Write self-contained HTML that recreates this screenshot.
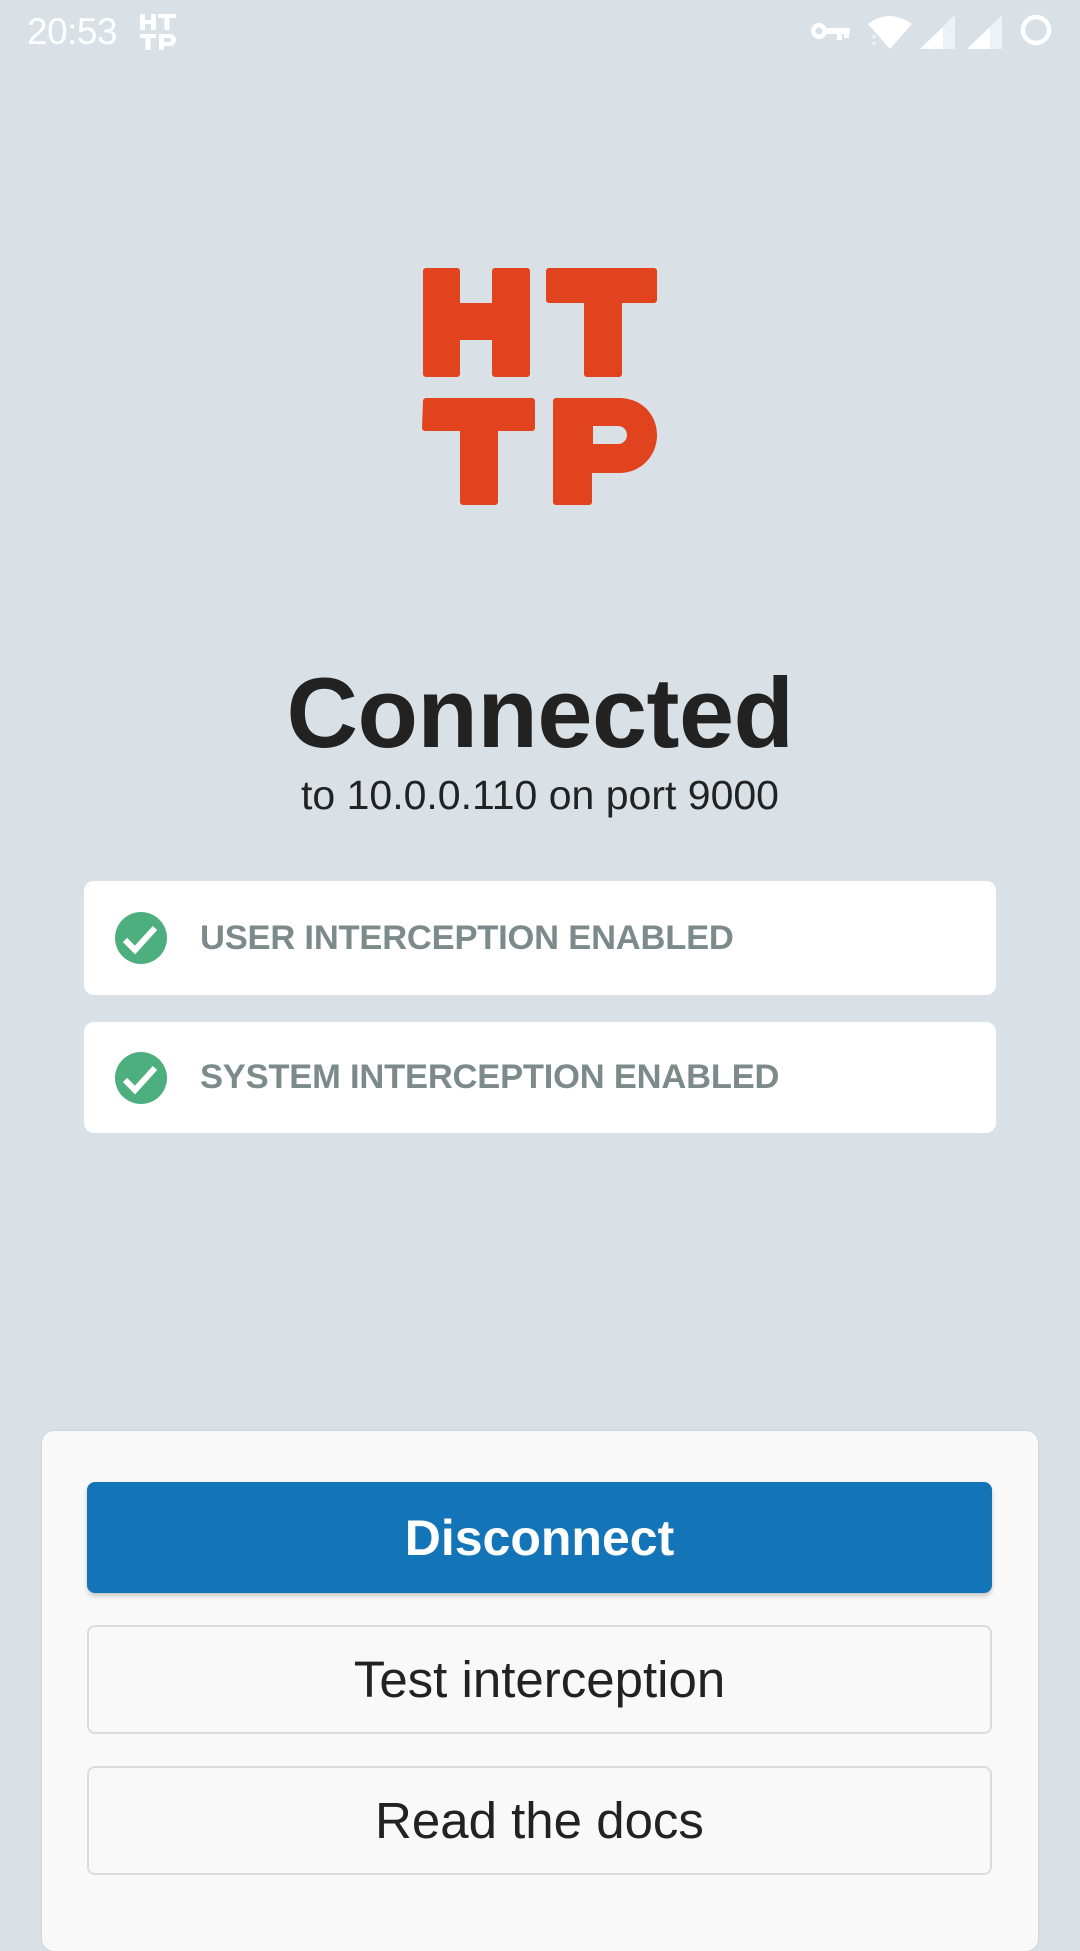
<!DOCTYPE html>
<html><head><meta charset="utf-8"><style>
html,body{margin:0;padding:0}
body{width:1080px;height:1920px;background:#d9e1e6;position:relative;overflow:hidden;font-family:"Liberation Sans",sans-serif}
.abs{position:absolute}
.card{position:absolute;left:84px;width:912px;background:#fff;border-radius:10px}
.card .t{position:absolute;left:116px;top:0;bottom:0;display:flex;align-items:center;color:#7d8a8b;font-weight:bold;font-size:34.5px;letter-spacing:-0.2px}
.card svg{position:absolute;left:115px;top:50%;margin-top:-26px}
.btn{position:absolute;left:87px;width:905px;border-radius:8px;display:flex;align-items:center;justify-content:center;box-sizing:border-box}
</style></head><body>
<div class="abs" style="left:27px;top:11px;color:#fff;font-size:37px;font-weight:300;letter-spacing:-0.5px">20:53</div>
<svg class="abs" style="left:140px;top:14px" width="38" height="38" viewBox="0 0 38 38" fill="#fff">
<path d="M0 0h5v6h6V0h5v16h-5v-6H5v6H0z"/><path d="M18 0h18v4h-6.5v12h-5V4H18z"/>
<path d="M0 20h16v4H10.5v12h-5V24H0z"/><path d="M19 20h11a6 6 0 0 1 0 12h-6v4h-5z M24 24v4h5a2 2 0 0 0 0-4z" fill-rule="evenodd"/>
</svg>
<svg class="abs" style="left:810px;top:22px" width="42" height="20" viewBox="0 0 42 20" fill="#fff">
<circle cx="9" cy="9" r="8"/><circle cx="9" cy="9" r="3.5" fill="#d9e1e6"/><rect x="15" y="6" width="25" height="6"/><rect x="27" y="10" width="5" height="8"/><rect x="34" y="10" width="5" height="6"/>
</svg>
<svg class="abs" style="left:866px;top:14px" width="48" height="36" viewBox="0 0 48 36">
<path d="M2 10Q23-6 46 10L24 35Z" fill="#fff"/><path d="M5 24l3-4 3 4zM5 28l3 4 3-4z" fill="#eef2f4"/>
</svg>
<svg class="abs" style="left:920px;top:14px" width="90" height="36" viewBox="0 0 90 36">
<path d="M0 35L35 1V35Z" fill="#eef2f4"/><path d="M0 35L23 13V35Z" fill="#fff"/>
<path d="M47 35L82 1V35Z" fill="#eef2f4"/><path d="M47 35L70 13V35Z" fill="#fff"/>
</svg>
<svg class="abs" style="left:1018px;top:12px" width="36" height="36"><circle cx="18" cy="18" r="13" fill="none" stroke="#fff" stroke-width="4.5"/></svg>
<svg class="abs" style="left:0;top:0" width="1080" height="520" fill="#e1431f">
<path d="M423 271a3 3 0 0 1 3-3h31a3 3 0 0 1 3 3v32h32v-32a3 3 0 0 1 3-3h32a3 3 0 0 1 3 3v103a3 3 0 0 1-3 3h-32a3 3 0 0 1-3-3v-34h-32v34a3 3 0 0 1-3 3h-31a3 3 0 0 1-3-3z"/>
<path d="M546 271a3 3 0 0 1 3-3h105a3 3 0 0 1 3 3v29a3 3 0 0 1-3 3h-32v71a3 3 0 0 1-3 3h-32a3 3 0 0 1-3-3v-71h-35a3 3 0 0 1-3-3z"/>
<path d="M423 401a3 3 0 0 1 3-3h106a3 3 0 0 1 3 3v27a3 3 0 0 1-3 3h-34v71a3 3 0 0 1-3 3h-32a3 3 0 0 1-3-3v-71h-35a3 3 0 0 1-3-3z"/>
<path fill-rule="evenodd" d="M553 401a3 3 0 0 1 3-3h63c22 0 38 16 38 37s-16 38-38 38h-27v29a3 3 0 0 1-3 3h-33a3 3 0 0 1-3-3z M593 426v18h25a9 9 0 0 0 0-18z"/>
</svg>
<div class="abs" style="left:0;width:1080px;top:653px;text-align:center;font-size:99px;font-weight:bold;color:#222;letter-spacing:-0.5px;line-height:120px">Connected</div>
<div class="abs" style="left:0;width:1080px;top:770px;text-align:center;font-size:41px;color:#222;line-height:50px">to 10.0.0.110 on port 9000</div>
<div class="card" style="top:881px;height:114px">
<svg width="52" height="52" viewBox="0 0 52 52" style="left:31px"><circle cx="26" cy="26" r="26" fill="#4caf7d"/><path d="M10 28l10 10 20-22" fill="none" stroke="#fff" stroke-width="6"/></svg>
<div class="t">USER INTERCEPTION ENABLED</div></div>
<div class="card" style="top:1022px;height:111px">
<svg width="52" height="52" viewBox="0 0 52 52" style="left:31px"><circle cx="26" cy="26" r="26" fill="#4caf7d"/><path d="M10 28l10 10 20-22" fill="none" stroke="#fff" stroke-width="6"/></svg>
<div class="t">SYSTEM INTERCEPTION ENABLED</div></div>
<div class="abs" style="left:42px;top:1431px;width:996px;height:520px;background:#f9f9f9;border-radius:12px;box-shadow:0 0 2px rgba(0,0,0,0.12)"></div>
<div class="btn" style="top:1482px;height:111px;background:#1375b8;color:#fff;font-weight:bold;font-size:50px;box-shadow:0 3px 5px rgba(0,0,0,0.2)">Disconnect</div>
<div class="btn" style="top:1625px;height:109px;border:2px solid #dcdcdc;color:#222;font-size:51px">Test interception</div>
<div class="btn" style="top:1766px;height:109px;border:2px solid #dcdcdc;color:#222;font-size:51px">Read the docs</div>
</body></html>
